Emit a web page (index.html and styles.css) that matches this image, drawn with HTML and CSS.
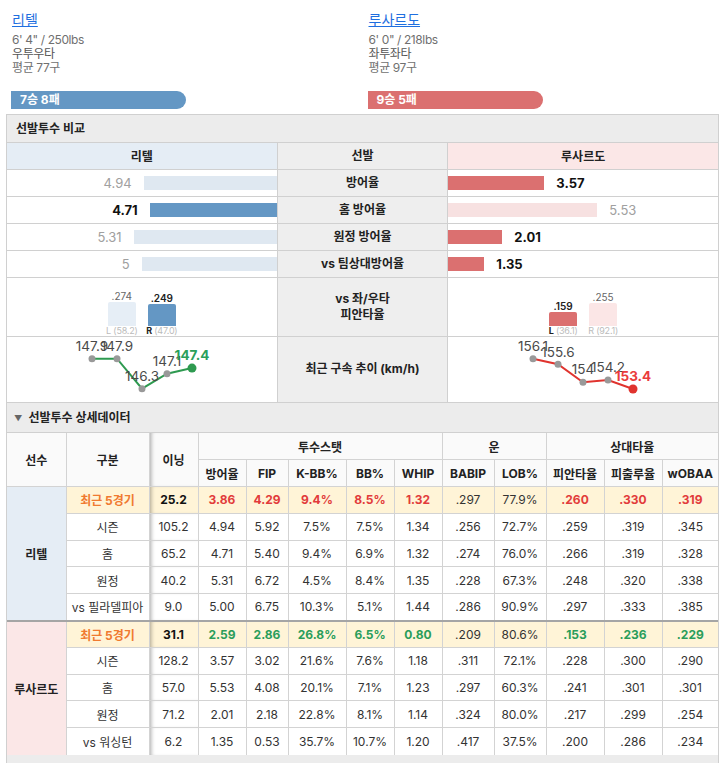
FILE: index.html
```html
<!DOCTYPE html>
<html lang="ko">
<head>
<meta charset="utf-8">
<link rel="stylesheet" href="styles.css">
</head>
<body>
<div class="wrap">
  <div class="players">
    <div class="player">
      <a class="name" href="#">리텔</a>
      <div class="info">6' 4" / 250lbs<br><span class="ko">우투우타</span><br>평균 77구</div>
      <div class="record rec-blue">7승 8패</div>
    </div>
    <div class="player">
      <a class="name" href="#">루사르도</a>
      <div class="info">6' 0" / 218lbs<br><span class="ko">좌투좌타</span><br>평균 97구</div>
      <div class="record rec-red">9승 5패</div>
    </div>
  </div>

  <div class="box">
    <div class="box-title">선발투수 비교</div>
    <table class="cmp">
      <colgroup><col class="c-side"><col class="c-mid"><col class="c-side"></colgroup>
      <tr class="r-head">
        <th class="h-blue">리텔</th><th class="mid">선발</th><th class="h-red">루사르도</th>
      </tr>
      <tr class="r-bar">
        <td><div class="lbar"><span class="val dim">4.94</span><span class="bar b-lblue" style="width:133px"></span></div></td>
        <td class="mid">방어율</td>
        <td><div class="rbar"><span class="bar b-red" style="width:96px"></span><span class="val strong">3.57</span></div></td>
      </tr>
      <tr class="r-bar">
        <td><div class="lbar"><span class="val strong">4.71</span><span class="bar b-blue" style="width:127px"></span></div></td>
        <td class="mid">홈 방어율</td>
        <td><div class="rbar"><span class="bar b-lred" style="width:149px"></span><span class="val dim">5.53</span></div></td>
      </tr>
      <tr class="r-bar">
        <td><div class="lbar"><span class="val dim">5.31</span><span class="bar b-lblue" style="width:143px"></span></div></td>
        <td class="mid">원정 방어율</td>
        <td><div class="rbar"><span class="bar b-red" style="width:54px"></span><span class="val strong">2.01</span></div></td>
      </tr>
      <tr class="r-bar">
        <td><div class="lbar"><span class="val dim">5</span><span class="bar b-lblue" style="width:135px"></span></div></td>
        <td class="mid">vs 팀상대방어율</td>
        <td><div class="rbar"><span class="bar b-red" style="width:36px"></span><span class="val strong">1.35</span></div></td>
      </tr>
      <tr class="r-split">
        <td>
          <div class="split">
            <div class="sp"><span class="sp-val">.274</span><span class="sp-bar b-lblue2" style="height:24px"></span><span class="sp-lab">L (58.2)</span></div>
            <div class="sp"><span class="sp-val on">.249</span><span class="sp-bar b-blue" style="height:22px"></span><span class="sp-lab"><b>R</b> (47.0)</span></div>
          </div>
        </td>
        <td class="mid">vs 좌/우타<br>피안타율</td>
        <td>
          <div class="split">
            <div class="sp"><span class="sp-val on">.159</span><span class="sp-bar b-red" style="height:14px"></span><span class="sp-lab"><b>L</b> (36.1)</span></div>
            <div class="sp"><span class="sp-val">.255</span><span class="sp-bar b-lred2" style="height:23px"></span><span class="sp-lab">R (92.1)</span></div>
          </div>
        </td>
      </tr>
      <tr class="r-line">
        <td>
          <svg class="spark" width="160" height="64" viewBox="0 0 160 64">
            <polyline class="ln-green" points="30,21.7 55,21.7 80,51.7 105,36.7 130,31.1"/>
            <circle class="pt" cx="30" cy="21.7" r="3.5"/>
            <circle class="pt" cx="55" cy="21.7" r="3.5"/>
            <circle class="pt" cx="80" cy="51.7" r="3.5"/>
            <circle class="pt" cx="105" cy="36.7" r="3.5"/>
            <circle class="pt-green" cx="130" cy="31.1" r="4.5"/>
            <text class="lbl" x="30" y="14">147.9</text>
            <text class="lbl" x="55" y="14">147.9</text>
            <text class="lbl" x="80" y="44">146.3</text>
            <text class="lbl" x="105" y="29">147.1</text>
            <text class="lbl last-green" x="130" y="23">147.4</text>
          </svg>
        </td>
        <td class="mid">최근 구속 추이 (km/h)</td>
        <td>
          <svg class="spark" width="160" height="64" viewBox="0 0 160 64">
            <polyline class="ln-red" points="30,21.7 55,27.3 80,45.2 105,43 130,52"/>
            <circle class="pt" cx="30" cy="21.7" r="3.5"/>
            <circle class="pt" cx="55" cy="27.3" r="3.5"/>
            <circle class="pt" cx="80" cy="45.2" r="3.5"/>
            <circle class="pt" cx="105" cy="43" r="3.5"/>
            <circle class="pt-red" cx="130" cy="52" r="4.5"/>
            <text class="lbl" x="30" y="14">156.1</text>
            <text class="lbl" x="55" y="20">155.6</text>
            <text class="lbl" x="80" y="37">154</text>
            <text class="lbl" x="105" y="35">154.2</text>
            <text class="lbl last-red" x="130" y="44">153.4</text>
          </svg>
        </td>
      </tr>
    </table>
  </div>

  <div class="box box2">
    <div class="box-title"><span class="tri">▼</span>선발투수 상세데이터</div>
    <table class="det">
      <colgroup>
        <col style="width:59px"><col style="width:83px"><col style="width:49px">
        <col style="width:48px"><col style="width:42px"><col style="width:58px"><col style="width:48px"><col style="width:48px">
        <col style="width:52px"><col style="width:52px">
        <col style="width:58px"><col style="width:58px"><col style="width:56px">
      </colgroup>
      <thead>
        <tr>
          <th rowspan="2">선수</th><th rowspan="2">구분</th><th rowspan="2" class="inn">이닝</th>
          <th colspan="5">투수스탯</th><th colspan="2">운</th><th colspan="3">상대타율</th>
        </tr>
        <tr>
          <th>방어율</th><th>FIP</th><th>K-BB%</th><th>BB%</th><th>WHIP</th>
          <th>BABIP</th><th>LOB%</th><th>피안타율</th><th>피출루율</th><th>wOBAA</th>
        </tr>
      </thead>
      <tbody>
        <tr class="recent">
          <td rowspan="5" class="pl pl-blue">리텔</td>
          <td class="gubun">최근 5경기</td><td class="inn b">25.2</td>
          <td class="bad">3.86</td><td class="bad">4.29</td><td class="bad">9.4%</td><td class="bad">8.5%</td><td class="bad">1.32</td>
          <td>.297</td><td>77.9%</td><td class="bad">.260</td><td class="bad">.330</td><td class="bad">.319</td>
        </tr>
        <tr><td>시즌</td><td class="inn">105.2</td><td>4.94</td><td>5.92</td><td>7.5%</td><td>7.5%</td><td>1.34</td><td>.256</td><td>72.7%</td><td>.259</td><td>.319</td><td>.345</td></tr>
        <tr><td>홈</td><td class="inn">65.2</td><td>4.71</td><td>5.40</td><td>9.4%</td><td>6.9%</td><td>1.32</td><td>.274</td><td>76.0%</td><td>.266</td><td>.319</td><td>.328</td></tr>
        <tr><td>원정</td><td class="inn">40.2</td><td>5.31</td><td>6.72</td><td>4.5%</td><td>8.4%</td><td>1.35</td><td>.228</td><td>67.3%</td><td>.248</td><td>.320</td><td>.338</td></tr>
        <tr><td>vs 필라델피아</td><td class="inn">9.0</td><td>5.00</td><td>6.75</td><td>10.3%</td><td>5.1%</td><td>1.44</td><td>.286</td><td>90.9%</td><td>.297</td><td>.333</td><td>.385</td></tr>

        <tr class="recent sep">
          <td rowspan="5" class="pl pl-red">루사르도</td>
          <td class="gubun">최근 5경기</td><td class="inn b">31.1</td>
          <td class="good">2.59</td><td class="good">2.86</td><td class="good">26.8%</td><td class="good">6.5%</td><td class="good">0.80</td>
          <td>.209</td><td>80.6%</td><td class="good">.153</td><td class="good">.236</td><td class="good">.229</td>
        </tr>
        <tr><td>시즌</td><td class="inn">128.2</td><td>3.57</td><td>3.02</td><td>21.6%</td><td>7.6%</td><td>1.18</td><td>.311</td><td>72.1%</td><td>.228</td><td>.300</td><td>.290</td></tr>
        <tr><td>홈</td><td class="inn">57.0</td><td>5.53</td><td>4.08</td><td>20.1%</td><td>7.1%</td><td>1.23</td><td>.297</td><td>60.3%</td><td>.241</td><td>.301</td><td>.301</td></tr>
        <tr><td>원정</td><td class="inn">71.2</td><td>2.01</td><td>2.18</td><td>22.8%</td><td>8.1%</td><td>1.14</td><td>.324</td><td>80.0%</td><td>.217</td><td>.299</td><td>.254</td></tr>
        <tr><td>vs 워싱턴</td><td class="inn">6.2</td><td>1.35</td><td>0.53</td><td>35.7%</td><td>10.7%</td><td>1.20</td><td>.417</td><td>37.5%</td><td>.200</td><td>.286</td><td>.234</td></tr>
      </tbody>
    </table>
  </div>
</div>
</body>
</html>
```

FILE: styles.css
```css
* { box-sizing: border-box; }
body {
  margin: 0;
  background: #fff;
  color: #333;
  font-family: Inter, "Noto Sans CJK KR", sans-serif;
}
.wrap { padding: 0 7px 0 6px; }

/* players */
.players { display: flex; padding-top: 9px; }
.player { flex: 1; padding-left: 6px; }
.name {
  display: inline-block;
  font-size: 14px;
  line-height: 20px;
  color: #1f6fe0;
  text-decoration: underline;
}
.info {
  margin-top: 3px;
  font-size: 12px;
  line-height: 14px;
  color: #707070;
  letter-spacing: -0.4px;
}
.info .ko { color: #555; }
.record {
  margin: 16px 0 5px -1px;
  width: 50%;
  height: 18px;
  border-radius: 0 9px 9px 0;
  padding-left: 9px;
  color: #fff;
  font-size: 12px;
  font-weight: 700;
  line-height: 18px;
}
.rec-blue { background: #6497c4; }
.rec-red { background: #db7070; }

/* boxes */
.box {
  border: 1px solid #d0d0d0;
  background: #ececec;
}
.box2 { border-top: none; padding-bottom: 12px; }
.box-title {
  height: 28px;
  line-height: 27px;
  padding-left: 9px;
  font-size: 12px;
  font-weight: 700;
  color: #222;
  border-bottom: 1px solid #d0d0d0;
}
.box2 .box-title { height: 30px; line-height: 29px; }
.tri {
  font-size: 8px;
  color: #666;
  margin: 0 6px 0 -2px;
  vertical-align: 1px;
}

/* compare table */
.cmp {
  width: 100%;
  border-collapse: collapse;
  border-style: hidden;
  table-layout: fixed;
  background: #fff;
}
.c-side { width: 38%; }
.c-mid { width: 24%; }
.cmp th, .cmp td {
  border: 1px solid #d0d0d0;
  padding: 0;
  font-size: 12px;
}
.cmp th { height: 26px; font-weight: 700; color: #222; }
.h-blue { background: #e5edf5; }
.h-red { background: #fbe7e7; }
.cmp .mid {
  background: #eeeeee;
  text-align: center;
  font-weight: 700;
  color: #222;
  line-height: 16px;
}
.r-bar td { height: 27px; }
.lbar, .rbar {
  display: flex;
  align-items: center;
  gap: 12px;
}
.lbar { justify-content: flex-end; }
.bar { display: block; height: 14px; }
.val { font-size: 13px; }
.val.dim { color: #a0a0a0; }
.val.strong { color: #111; font-weight: 700; }
.b-blue { background: #6497c4; }
.b-lblue { background: #dfe8f1; }
.b-lblue2 { background: #e6eef6; }
.b-red { background: #db7070; }
.b-lred { background: #f7e1e1; }
.b-lred2 { background: #fbe6e6; }

.r-split td { height: 59px; }
.split {
  display: flex;
  justify-content: center;
  align-items: flex-end;
  gap: 12px;
  height: 58px;
}
.sp {
  display: flex;
  flex-direction: column;
  align-items: center;
  width: 28px;
}
.sp-val { font-size: 10px; line-height: 12px; color: #666; }
.sp-val.on { color: #222; font-weight: 600; }
.sp-bar { display: block; width: 28px; border-radius: 2px 2px 0 0; }
.sp-lab { font-size: 9px; line-height: 10px; color: #bbb; white-space: nowrap; letter-spacing: -0.2px; }
.sp-lab b { color: #222; }

.r-line td { height: 66px; }
.spark { display: block; margin: 0 auto; }
.ln-green { fill: none; stroke: #2e9a50; stroke-width: 2; }
.ln-red { fill: none; stroke: #e0332e; stroke-width: 2; }
.pt { fill: #999; }
.pt-green { fill: #2e9a50; }
.pt-red { fill: #e0332e; }
.lbl {
  font-family: Inter, sans-serif;
  font-size: 13.5px;
  fill: #4a4a4a;
  text-anchor: middle;
}
.last-green { fill: #2aa05a; font-weight: 700; }
.last-red { fill: #ea3c3c; font-weight: 700; }

/* detail table */
.det {
  width: 100%;
  border-collapse: collapse;
  border-style: hidden;
  table-layout: fixed;
  background: #fff;
}
.det th, .det td {
  border: 1px solid #d3d3d3;
  padding: 0;
  height: 26.8px;
  text-align: center;
  font-size: 12px;
  white-space: nowrap;
}
.det th { background: #fafafa; font-weight: 700; color: #222; }
.det td { color: #333; }
.det .inn { box-shadow: inset 4px 0 4px -3px rgba(0, 0, 0, 0.35); }
.det .b { font-weight: 700; color: #111; }
.recent td { background: #fff4d7; font-weight: 700; }
.recent td:nth-last-child(4), .recent td:nth-last-child(5) { font-weight: 400; }
.recent .gubun { color: #f07a30; }
.det .bad { color: #e23b3b; }
.det .good { color: #2a9d5a; }
.det td.pl { font-weight: 700; color: #222; }
.det td.pl-blue { background: #e5edf5; }
.det td.pl-red { background: #fbe7e7; }
.sep td { border-top: 2px solid #a5a5a5; }
```
